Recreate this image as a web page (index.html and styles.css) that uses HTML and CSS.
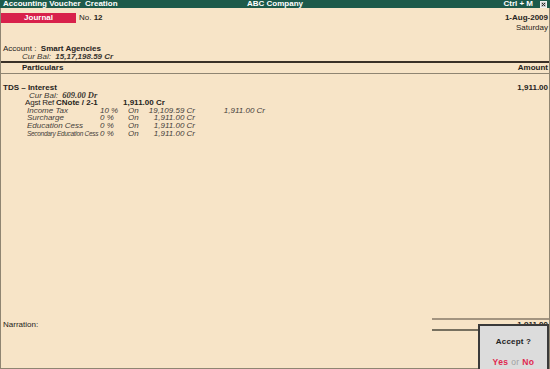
FILE: index.html
```html
<!DOCTYPE html>
<html>
<head>
<meta charset="utf-8">
<link rel="stylesheet" href="styles.css">
</head>
<body>
<div class="screen">
  <div class="titlebar">
    <span class="t-left">Accounting Voucher&nbsp; Creation</span>
    <span class="t-mid">ABC Company</span>
    <span class="t-right">Ctrl + M <span class="closebox"><svg width="7" height="7" viewBox="0 0 7 7"><rect x="0.5" y="0.5" width="6" height="6" fill="#c9c9c9" stroke="#f0f0f0" stroke-width="1"/><path d="M2 2 L5 5 M5 2 L2 5" stroke="#2a2a2a" stroke-width="1"/></svg></span></span>
  </div>
  <div class="main">
    <div class="top">
      <div class="vtype">
        <span class="badge">Journal</span>
        <span class="vno">No. <b>12</b></span>
      </div>
      <div class="date">
        <b>1-Aug-2009</b>
        <span>Saturday</span>
      </div>
    </div>
    <div class="account">
      <div class="acc-line">Account :&nbsp; <b>Smart Agencies</b></div>
      <div class="acc-bal"><i>Cur Bal:</i>&nbsp; <b><i>15,17,198.59 Cr</i></b></div>
    </div>
    <div class="colhead">
      <span class="ch-part">Particulars</span>
      <span class="ch-amt">Amount</span>
    </div>
    <div class="body">
      <div class="entry">
        <b>TDS – Interest</b>
        <b>1,911.00</b>
      </div>
      <div class="curbal"><i>Cur Bal:</i>&nbsp; <b class="serif">609.00 Dr</b></div>
      <div class="agst">
        <span class="ag-l">Agst Ref</span>
        <b class="ag-ref">CNote / 2-1</b>
        <b class="ag-amt">1,911.00 Cr</b>
      </div>
      <div class="tax">
        <span>Income Tax</span><span>10 %</span><span>On</span><span class="r">19,109.59 Cr</span><span class="r">1,911.00 Cr</span>
      </div>
      <div class="tax">
        <span>Surcharge</span><span>0 %</span><span>On</span><span class="r">1,911.00 Cr</span><span></span>
      </div>
      <div class="tax">
        <span>Education Cess</span><span>0 %</span><span>On</span><span class="r">1,911.00 Cr</span><span></span>
      </div>
      <div class="tax">
        <span class="tiny">Secondary Education Cess</span><span>0 %</span><span>On</span><span class="r">1,911.00 Cr</span><span></span>
      </div>
    </div>
    <div class="footer">
      <span class="narr">Narration:</span>
      <div class="totals"><b>1,911.00</b></div>
    </div>
  </div>
  <div class="accept">
    <b class="acc-q">Accept ?</b>
    <div class="yn"><b class="red">Yes</b> <span class="or">or</span> <b class="red">No</b></div>
  </div>
</div>
</body>
</html>
```

FILE: styles.css
```css
* { box-sizing: border-box; }
html, body { margin: 0; padding: 0; }
body {
  background: #f7e4c7;
  font-family: "Liberation Sans", Arial, sans-serif;
  font-size: 8px;
  color: #262320;
  white-space: nowrap;
}
.screen {
  position: relative;
  width: 550px;
  height: 369px;
  background: #f7e4c7;
  overflow: hidden;
}
.titlebar {
  height: 8px;
  line-height: 8px;
  background: #1d5a4a;
  color: #fff;
  font-weight: bold;
  display: grid;
  grid-template-columns: 1fr auto 1fr;
  padding: 0 3px 0 3px;
}
.t-mid { text-align: center; }
.t-right {
  display: flex;
  justify-content: flex-end;
  align-items: center;
  gap: 7px;
}
.closebox { display: flex; }
.closebox svg { display: block; }

.main {
  height: 361px;
  border-left: 1px solid #8f8572;
  border-right: 1px solid #8f8572;
  border-bottom: 1px solid #8f8572;
  display: flex;
  flex-direction: column;
}
.top {
  padding-top: 5px;
  display: flex;
  justify-content: space-between;
  align-items: flex-start;
}
.vtype { display: flex; align-items: center; }
.badge {
  width: 75px;
  height: 10px;
  line-height: 10px;
  background: #d8214b;
  color: #fff;
  font-weight: bold;
  text-align: center;
}
.vno { margin-left: 3px; line-height: 10px; }
.date {
  display: flex;
  flex-direction: column;
  align-items: flex-end;
  line-height: 10px;
  padding-right: 1px;
}
.account { margin-top: 12px; }
.acc-line { line-height: 8px; padding-left: 2px; }
.acc-bal { line-height: 8px; padding-left: 21px; color: #2e2a26; }
.acc-bal i { color: #3a3630; }

.colhead {
  border-top: 2px solid #3a3128;
  border-bottom: 1px solid #8f8572;
  height: 13px;
  line-height: 10px;
  display: flex;
  justify-content: space-between;
  font-weight: bold;
}
.ch-part { padding-left: 21px; }
.ch-amt { padding-right: 1px; }

.body {
  flex: 1;
  padding-top: 10px;
}
.entry {
  line-height: 7.6px;
  display: flex;
  justify-content: space-between;
  padding: 0 1px 0 2px;
}
.curbal { line-height: 7.6px; padding-left: 28px; color: #3a3630; }
.serif { font-family: "Liberation Serif", "Times New Roman", serif; font-style: italic; font-size: 8.5px; }
.agst {
  line-height: 7.6px;
  display: grid;
  grid-template-columns: 31px 67px auto;
  padding-left: 24px;
}
.ag-l { letter-spacing: -0.2px; }
.tax {
  line-height: 7.6px;
  display: grid;
  grid-template-columns: 73px 28px 22px 45px 70px;
  padding-left: 26px;
  font-style: italic;
  color: #45403a;
}
.tax .r { justify-self: end; }
.tiny {
  font-size: 6.5px;
  letter-spacing: -0.3px;
}

.footer {
  height: 50px;
  display: flex;
  justify-content: space-between;
  align-items: flex-start;
}
.narr { padding-left: 2px; padding-top: 3px; line-height: 8px; }
.totals {
  width: 117px;
  border-top: 2px solid #a39480;
  border-bottom: 2px solid #77705f;
  line-height: 9px;
  text-align: right;
  padding-right: 1px;
}

.accept {
  position: absolute;
  right: 1px;
  bottom: 0;
  width: 71px;
  height: 45px;
  background: #dcdcdc;
  border: 2px solid #3a3a3a;
  border-bottom: none;
  display: flex;
  flex-direction: column;
  align-items: center;
  padding-top: 11px;
  gap: 12px;
}
.acc-q { line-height: 9px; color: #222; letter-spacing: 0.2px; }
.yn { line-height: 9px; font-size: 8.5px; letter-spacing: 0.4px; }
.red { color: #e0284f; }
.or { color: #a0a0a0; }
```
